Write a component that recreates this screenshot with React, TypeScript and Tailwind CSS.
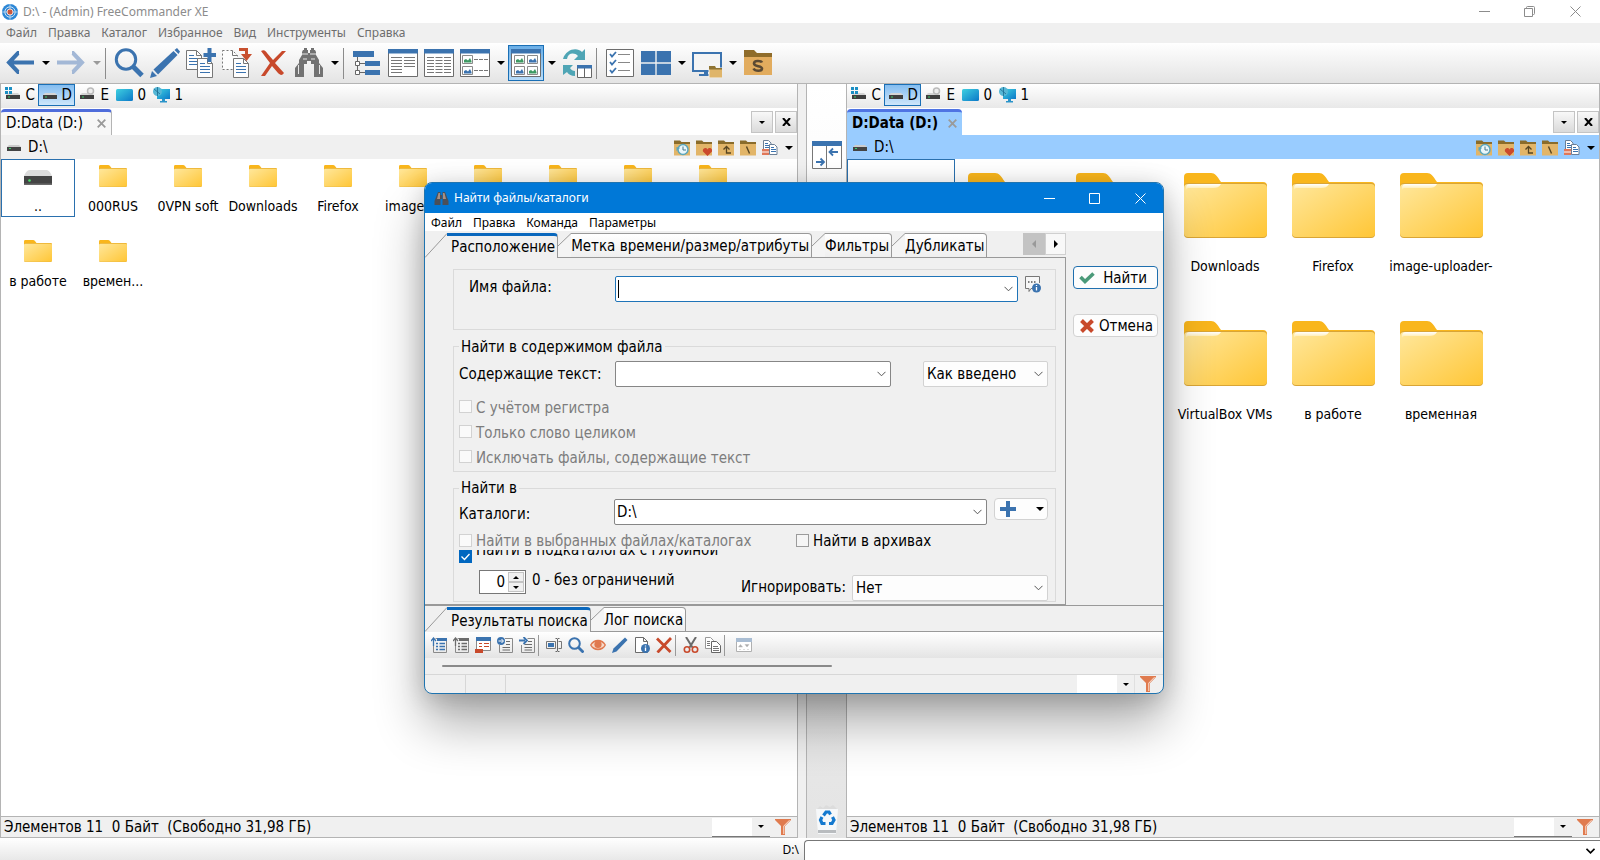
import type { ReactNode } from 'react'

const BLUE = '#3b73af'

/* ---------- small shared pieces ---------- */

function Caret({ color = '#000' }: { color?: string }) {
  return (
    <svg viewBox="0 0 8 4" className="h-1 w-2 shrink-0" aria-hidden="true">
      <path d="M0 0h8L4 4z" fill={color} />
    </svg>
  )
}

function Chevron() {
  return (
    <svg viewBox="0 0 9 6" className="h-1.5 w-[9px] shrink-0" fill="none" stroke="#555" aria-hidden="true">
      <path d="M.5.8 4.5 4.8 8.5.8" />
    </svg>
  )
}

function Funnel() {
  return (
    <svg viewBox="0 0 16 16" className="size-4 shrink-0" aria-hidden="true">
      <path d="M0 0h16v1L10 7v9H6V7L0 1z" fill="#e07b4f" />
      <path d="M14.5 1.2 8.8 7v8" stroke="#fbe4d8" fill="none" />
    </svg>
  )
}

/* ---------- main toolbar icons (30 x 30) ---------- */

function Icon30({ children }: { children: ReactNode }) {
  return (
    <svg viewBox="0 0 30 30" className="size-[30px]" fill="none" aria-hidden="true">
      {children}
    </svg>
  )
}

function ArrowIcon({ forward = false }: { forward?: boolean }) {
  return (
    <Icon30>
      {forward ? (
        <path d="M1 14.500H26M16 5h1l9 9.500L17 24h-1" stroke="#a3b8d6" strokeWidth="4" />
      ) : (
        <path d="M29 14.500H4M14 5h-1L4 14.500 13 24h1" stroke={BLUE} strokeWidth="4" />
      )}
    </Icon30>
  )
}

function SearchIcon() {
  return (
    <Icon30>
      <circle cx="12" cy="11.500" r="9.700" stroke={BLUE} strokeWidth="3" />
      <path d="m19 18.500 9 9" stroke={BLUE} strokeWidth="5" />
    </Icon30>
  )
}

function PencilIcon() {
  return (
    <Icon30>
      <path d="M0 30l2-7 5 5z" fill={BLUE} />
      <path d="M3.500 21.500 23.500 3l4 4L8 26.500z" fill={BLUE} />
      <path d="m24.500 2 2.500-2 3 3.500-1.500 2.500z" fill={BLUE} />
      <path d="m2.500 22 5.500 5.500" stroke="#dfe8f2" />
    </Icon30>
  )
}

function PageLines({ x, y, dashed = false }: { x: number; y: number; dashed?: boolean }) {
  return (
    <g transform={`translate(${x} ${y})`}>
      <path
        d="M.5.500h10l5 5v14H.500z"
        fill="#fdfdfd"
        stroke="#777"
        strokeDasharray={dashed ? '2 2' : undefined}
      />
      <path d="M10.500.500v5h5" stroke="#777" />
      {!dashed && <path d="M3 5.500h5M3 8.500h10M3 11.500h10M3 14.500h10" stroke={BLUE} />}
    </g>
  )
}

function CopyIcon() {
  return (
    <Icon30>
      <PageLines x={0} y={2} />
      <PageLines x={11} y={10} />
      <path d="M21.500 0h4v5h5v4h-5v5h-4V9h-4V5h4z" fill={BLUE} />
    </Icon30>
  )
}

function MoveIcon() {
  return (
    <Icon30>
      <PageLines x={0} y={2} dashed />
      <PageLines x={11} y={10} />
      <path d="M17 0h9v6h4l-5.500 7L19 6h4V3h-6z" fill="#c8502f" />
    </Icon30>
  )
}

function DeleteIcon() {
  return (
    <Icon30>
      <path d="M3 3c3-2 5 0 6 2l6 7 9-9h4L17 15l9 10c-2 3-4 2-6 0l-6-7-7 10H3l9-13z" fill="#c8492b" />
    </Icon30>
  )
}

function Binoculars() {
  return (
    <Icon30>
      <path
        d="M9 2h5v3h2V2h5l1 2v3l3 5v3l4 5v9h-9V16h-3v-3h-4v3h-3v13H1v-9l4-5v-3l3-5V4z"
        fill="#727272"
      />
      <path d="M8 6h6M16 6h6M4.500 17v9M25.500 17v9M9 11h4M17 11h4" stroke="#e6e6e6" />
      <path d="M10 0h3v2h-3zM17 0h3v2h-3z" fill="#727272" />
    </Icon30>
  )
}

function TreeIcon() {
  return (
    <Icon30>
      <path d="M1 3h21v6H1zM13 13h15v5H13zM13 22h15v5H13z" fill={BLUE} />
      <path d="M5.500 9v15.500M5.500 15.500H13M5.500 24.500H13" stroke="#666" />
      <path d="M3.500 13.500h4v4h-4zM3.500 22.500h4v4h-4z" fill="#fff" stroke="#666" />
    </Icon30>
  )
}

function WindowFrame({ children }: { children: ReactNode }) {
  return (
    <Icon30>
      <path d="M.5 1.500h29v27H.500z" fill="#fff" stroke="#6d6d6d" />
      <path d="M0 1h30v4.500H0z" fill={BLUE} />
      {children}
    </Icon30>
  )
}

function Picture({ x, y, color }: { x: number; y: number; color: string }) {
  return (
    <g transform={`translate(${x} ${y})`}>
      <path d="M.5.500h10v8H.500z" fill="#fff" stroke="#8a8a8a" />
      <path d="M2 7.500V5l2-1 2 1.500L8 3l1.500 3v1.500z" fill={color} />
    </g>
  )
}

const ColumnsIcon = () => (
  <WindowFrame>
    <path
      d="M3 9.500h11M3 12.500h11M3 15.500h11M3 18.500h11M3 21.500h11M3 24.500h11M16 9.500h11M16 12.500h11M16 15.500h11M16 18.500h11"
      stroke="#777"
    />
  </WindowFrame>
)

const DetailsIcon = () => (
  <WindowFrame>
    <path
      d="M3 9.500h24M3 12.500h24M3 15.500h24M3 18.500h24M3 21.500h24M3 24.500h24"
      stroke="#777"
      strokeDasharray="7 1.500"
    />
  </WindowFrame>
)

const ThumbListIcon = () => (
  <WindowFrame>
    <Picture x={2} y={7} color="#3d9a63" />
    <Picture x={2} y={18} color={BLUE} />
    <path d="M14 11.500h14M14 22.500h14" stroke="#777" strokeDasharray="4 1" />
  </WindowFrame>
)

const ThumbsIcon = () => (
  <WindowFrame>
    <Picture x={3} y={7} color="#3d9a63" />
    <Picture x={16} y={7} color={BLUE} />
    <Picture x={3} y={18} color={BLUE} />
    <Picture x={16} y={18} color="#3d9a63" />
  </WindowFrame>
)

function RefreshIcon() {
  return (
    <Icon30>
      <path d="M1 11C4 1 15-1 20 4l3-3v11H12l4-4C12 4 6 5 5 11z" fill="#4fa5b5" />
      <path d="M1 27V17h10l-3 3c1 2 3 3 5 3v5c-4 0-7-2-8-4l-4 3z" fill="#4fa5b5" />
      <path d="M15.500 17.500h14v12h-14zM22.500 17v13" fill="#fff" stroke="#666" />
      <path d="M15 17h15v3.500H15z" fill={BLUE} />
    </Icon30>
  )
}

function ChecklistIcon() {
  return (
    <Icon30>
      <path d="M1.500 1.500h27v27h-27z" fill="#fff" stroke="#6d6d6d" />
      <path d="M13 6.500h12M13 14.500h12M13 22.500h12" stroke="#888" />
      <path d="m5 6 2 2.500L11 4M5 14l2 2.500 4-4.500M5 22l2 2.500 4-4.500" stroke={BLUE} strokeWidth="1.800" />
    </Icon30>
  )
}

const TilesIcon = () => (
  <Icon30>
    <path d="M0 3h14.300v11.300H0zM15.700 3H30v11.300H15.700zM0 15.700h14.300V27H0zM15.700 15.700H30V27H15.700z" fill={BLUE} />
  </Icon30>
)

const MonitorIcon = () => (
  <Icon30>
    <path d="M1 5h28v18H1z" fill="#f4f4f4" stroke={BLUE} strokeWidth="2" />
    <path d="M7 26h11v2H7zM12 24h4v2h-4z" fill={BLUE} />
    <path d="M17 18h6l1 2h7v10H17z" fill="#dfb56a" stroke="#f2f2f2" strokeWidth="1" />
    <path d="M17 18h6l1 2h7v1.500H17z" fill="#8f7433" />
  </Icon30>
)

function ShellFolderIcon() {
  return (
    <Icon30>
      <path d="M1 2h10l3 3h15v4H1z" fill="#8f6c2a" />
      <path d="M1 9h28v18H1z" fill="#e2ac5e" />
      <path
        d="M19 14.500c-1-2-8-2.500-8 1s8 2 8 5-7 3-8.500 0"
        stroke="#5c4a33"
        strokeWidth="2.600"
      />
    </Icon30>
  )
}

function ToolButton({ label, pressed = false, children }: { label: string; pressed?: boolean; children: ReactNode }) {
  return (
    <button
      type="button"
      aria-label={label}
      className={
        pressed
          ? 'grid size-9 shrink-0 place-items-center border border-[#1a6fb5] bg-linear-to-b from-[#6aaee6] to-[#b8dcf8]'
          : 'grid size-9 shrink-0 place-items-center'
      }
    >
      {children}
    </button>
  )
}

function DropButton({ label, color }: { label: string; color?: string }) {
  return (
    <button type="button" aria-label={label} className="grid h-9 w-[15px] shrink-0 place-items-center">
      <Caret color={color} />
    </button>
  )
}

const Separator = () => <span className="mr-[5px] ml-px h-[31px] w-px shrink-0 bg-[#8c8c8c]" />

function MainToolbar() {
  return (
    <div className="flex h-[41px] shrink-0 items-center border-b border-[#b4b4b4] bg-linear-to-b from-white to-[#e4e4e4] pl-0.5">
      <ToolButton label="Назад"><ArrowIcon /></ToolButton>
      <DropButton label="История назад" />
      <ToolButton label="Вперёд"><ArrowIcon forward /></ToolButton>
      <DropButton label="История вперёд" color="#9a9a9a" />
      <Separator />
      <ToolButton label="Просмотр"><SearchIcon /></ToolButton>
      <ToolButton label="Изменить"><PencilIcon /></ToolButton>
      <ToolButton label="Копировать"><CopyIcon /></ToolButton>
      <ToolButton label="Переместить"><MoveIcon /></ToolButton>
      <ToolButton label="Удалить"><DeleteIcon /></ToolButton>
      <ToolButton label="Найти файлы"><Binoculars /></ToolButton>
      <DropButton label="Варианты поиска" />
      <Separator />
      <ToolButton label="Дерево"><TreeIcon /></ToolButton>
      <ToolButton label="Список"><ColumnsIcon /></ToolButton>
      <ToolButton label="Таблица"><DetailsIcon /></ToolButton>
      <ToolButton label="Эскизы списком"><ThumbListIcon /></ToolButton>
      <DropButton label="Варианты списка" />
      <ToolButton label="Эскизы" pressed><ThumbsIcon /></ToolButton>
      <DropButton label="Варианты эскизов" />
      <ToolButton label="Обновить"><RefreshIcon /></ToolButton>
      <Separator />
      <ToolButton label="Выбор"><ChecklistIcon /></ToolButton>
      <ToolButton label="Раскладка"><TilesIcon /></ToolButton>
      <DropButton label="Варианты раскладки" />
      <ToolButton label="Рабочий стол"><MonitorIcon /></ToolButton>
      <DropButton label="Системные папки" />
      <ToolButton label="Папка S"><ShellFolderIcon /></ToolButton>
    </div>
  )
}

/* ---------- drives ---------- */

type DriveKind = 'system' | 'disk' | 'optical' | 'desktop' | 'network'

function DriveIcon({ kind }: { kind: DriveKind }) {
  if (kind === 'desktop' || kind === 'network') {
    return (
      <svg viewBox="0 0 17 16" className="h-4 w-[17px] shrink-0" aria-hidden="true">
        <defs>
          <linearGradient id="screen" x1="0" y1="0" x2="1" y2="1">
            <stop offset="0" stopColor="#3fd0e0" />
            <stop offset="1" stopColor="#0b78c8" />
          </linearGradient>
        </defs>
        {kind === 'desktop' ? (
          <rect x="0" y="2" width="17" height="12" rx="1.500" fill="url(#screen)" />
        ) : (
          <>
            <path d="M4 2h13v10H4z" fill="url(#screen)" />
            <path d="M9 12h3v2h2v1.500H7V14h2z" fill="#2a93c9" />
            <circle cx="4.500" cy="4.500" r="4.500" fill="#56b7d6" />
            <path d="M1 2l6 5M4.500 0v9" stroke="#1c6c92" strokeWidth=".8" />
          </>
        )}
      </svg>
    )
  }
  return (
    <svg viewBox="0 0 16 16" className="size-4 shrink-0" aria-hidden="true">
      <path d="M3 6h10l2 2H1z" fill="#d5d5d5" />
      <path d="M1 8h14v4H1z" fill="#3f3f3f" />
      <path d="M3 9.500h2v1H3z" fill="#3bd16b" />
      {kind === 'system' && <path d="M0 0h3v3H0zM4 0h3v3H4zM0 4h3v3H0zM4 4h3v3H4z" fill="#1c8fc4" />}
      {kind === 'optical' && <circle cx="11.500" cy="4" r="3" fill="#eee" stroke="#bbb" strokeWidth="1.500" />}
    </svg>
  )
}

const drives: { name: string; kind: DriveKind }[] = [
  { name: 'C', kind: 'system' },
  { name: 'D', kind: 'disk' },
  { name: 'E', kind: 'optical' },
  { name: '0', kind: 'desktop' },
  { name: '1', kind: 'network' },
]

function DriveBar() {
  return (
    <div className="flex h-6 shrink-0 items-start bg-linear-to-b from-white to-[#e8e8e8] text-[15px]">
      {drives.map((d) => (
        <button
          key={d.name}
          type="button"
          className={
            d.name === 'D'
              ? 'flex h-[22px] w-[37px] items-center justify-between border border-[#1a6fb5] bg-linear-to-b from-[#84bdf0] to-[#cde6fb] pr-0.5 pl-[3px]'
              : 'flex h-[22px] w-[37px] items-center justify-between pr-[3px] pl-1'
          }
        >
          <DriveIcon kind={d.kind} />
          <span className="pt-0.5">{d.name}</span>
        </button>
      ))}
    </div>
  )
}

/* ---------- file panels ---------- */

function Folder({ large = false }: { large?: boolean }) {
  return (
    <svg viewBox="0 0 83 65" className={large ? 'h-[65px] w-[83px]' : 'h-[22px] w-7'} aria-hidden="true">
      <defs>
        <linearGradient id="folder" x1="0" y1="0" x2="1" y2="1">
          <stop offset="0" stopColor="#ffe79b" />
          <stop offset="1" stopColor="#ffc636" />
        </linearGradient>
        <linearGradient id="sheen" x1="0" y1="0" x2="0" y2="1">
          <stop offset="0" stopColor="#fff" />
          <stop offset="1" stopColor="#ffe79b" />
        </linearGradient>
      </defs>
      <path d="M0 4a4 4 0 0 1 4-4h23c4 0 6 3 10 9h42a4 4 0 0 1 4 4v20H0z" fill="#f9b61c" />
      <path d="M0 14a4 4 0 0 1 4-4h75a4 4 0 0 1 4 4v47a4 4 0 0 1-4 4H4a4 4 0 0 1-4-4z" fill="#d9a536" />
      <path d="M0 15a4 4 0 0 1 4-4h75a4 4 0 0 1 4 4v45a4 4 0 0 1-4 4H4a4 4 0 0 1-4-4z" fill="url(#folder)" />
      {large && <path d="M2 15a4 4 0 0 1 4-4h31c-2 3-4 4-8 4H6c-2 0-3 0-4 2z" fill="url(#sheen)" />}
    </svg>
  )
}

function DriveLarge({ large = false }: { large?: boolean }) {
  return (
    <svg viewBox="0 0 28 22" className={large ? 'h-[65px] w-[83px]' : 'h-[22px] w-7'} aria-hidden="true">
      <path d="M5 5h18q3 1 5 6H0q2-5 5-6z" fill="#dcdcdc" />
      <path d="M0 11h28v9H0z" fill="#444" />
      <path d="M0 18.500h28v1.500H0z" fill="#6a6a6a" />
      <circle cx="5.500" cy="15.500" r="1.300" fill="#49e06a" />
    </svg>
  )
}

function PathIcon({ label, children, plain = false }: { label: string; children: ReactNode; plain?: boolean }) {
  return (
    <button type="button" aria-label={label} className="grid w-[22px] place-items-center">
      <svg viewBox="0 0 16 16" className="size-4" fill="none" aria-hidden="true">
        {!plain && (
          <>
            <path d="M0 .500h6L7.500 2H16v3H0z" fill="#8a6c2b" />
            <path d="M0 4h16v11.500H0z" fill="#e2b568" />
          </>
        )}
        {children}
      </svg>
    </button>
  )
}

const Sheet = ({ x, y }: { x: number; y: number }) => (
  <g transform={`translate(${x} ${y})`}>
    <path d="M.5.500h5l2.500 2.500v7.500H.500z" fill="#fff" stroke="#6b7f96" />
    <path d="M2 3.500h3M2 5.500h5M2 7.500h5" stroke={BLUE} />
  </g>
)

function SmallTabButton({ label, children }: { label: string; children: ReactNode }) {
  return (
    <button
      type="button"
      aria-label={label}
      className="grid size-[22px] place-items-center border border-[#c4c4c4] bg-linear-to-b from-[#f8f8f8] to-[#dadada]"
    >
      {children}
    </button>
  )
}

function StatusFilter() {
  return (
    <div className="flex items-center gap-[5px] pr-1.5">
      <div className="flex h-[19px] w-[58px] items-center border-b border-[#777]">
        <input aria-label="Фильтр" className="h-full w-10 bg-white outline-none" />
        <button type="button" aria-label="Список фильтров" className="grid flex-1 place-items-center">
          <svg viewBox="0 0 6 3" className="h-[3px] w-1.5" aria-hidden="true"><path d="M0 0h6L3 3z" /></svg>
        </button>
      </div>
      <button type="button" aria-label="Применить фильтр"><Funnel /></button>
    </div>
  )
}

const folders: { name: string; short?: string }[] = [
  { name: '..' },
  { name: '000RUS' },
  { name: '0VPN soft' },
  { name: 'Downloads' },
  { name: 'Firefox' },
  { name: 'image-uploader-', short: 'image-...' },
  { name: '' },
  { name: '' },
  { name: '' },
  { name: 'VirtualBox VMs', short: 'VirtualB...' },
  { name: 'в работе' },
  { name: 'временная', short: 'времен...' },
]

function Panel({ active = false }: { active?: boolean }) {
  return (
    <section className="flex min-w-0 flex-1 flex-col border-x border-[#b4b4b4] bg-white">
      <DriveBar />
      <div className="flex h-[27px] shrink-0 items-end justify-between">
        <div
          className={
            active
              ? 'flex h-[26px] items-center gap-2.5 rounded-t-sm border-t-[3px] border-[#4f74e3] bg-[#99ccff] px-[5px] font-bold'
              : 'flex h-[26px] items-center gap-3.5 rounded-t-sm border-t-[3px] border-r border-t-[#4f6ddb] border-r-[#b4b4b4] bg-[#f7f7f7] px-[5px]'
          }
        >
          <span className="text-[15px] whitespace-nowrap">D:Data (D:)</span>
          <button type="button" aria-label="Закрыть вкладку">
            <svg viewBox="0 0 9 9" className="size-[9px]" stroke="#9a9a9a" strokeWidth="1.800" aria-hidden="true">
              <path d="m.7.700 7.600 7.600M8.300.700.700 8.300" />
            </svg>
          </button>
        </div>
        <div className="flex gap-0.5 pb-0.5">
          <SmallTabButton label="Список вкладок">
            <svg viewBox="0 0 6 3" className="h-[3px] w-1.5" aria-hidden="true"><path d="M0 0h6L3 3z" /></svg>
          </SmallTabButton>
          <SmallTabButton label="Закрыть">
            <svg viewBox="0 0 9 8" className="h-2 w-[9px]" stroke="#000" strokeWidth="2" aria-hidden="true">
              <path d="m1 0 7 8M8 0 1 8" />
            </svg>
          </SmallTabButton>
        </div>
      </div>
      <div
        className={
          active
            ? 'flex h-6 shrink-0 items-center bg-[#99ccff] pt-0.5 pr-0.5 pl-1.5'
            : 'flex h-6 shrink-0 items-center bg-[#f0f0f0] pt-0.5 pr-0.5 pl-1.5'
        }
      >
        <svg viewBox="0 0 14 6" className="h-1.5 w-3.5" aria-hidden="true">
          <path d="M2 0h10l2 2H0z" fill="#ccc" />
          <path d="M0 2h14v4H0z" fill="#444" />
          <path d="M2 3h2v1H2z" fill="#3bd16b" />
        </svg>
        <span className="ml-[7px] flex-1 text-[15px]">D:\</span>
        <PathIcon label="История">
          <circle cx="9" cy="9.500" r="5" fill="#eaf6fa" stroke="#5aa6bd" strokeWidth="1.500" />
          <path d="M9 6.500v3.500h3" stroke="#44788a" />
          <path d="M2.500 7v4L6 8z" fill="#5aa6bd" />
        </PathIcon>
        <PathIcon label="Избранное">
          <path d="M11.500 16 7 11.500c-1-3 3-5 4.500-2 1.500-3 5.500-1 4.500 2z" fill="#cb4a2c" />
        </PathIcon>
        <PathIcon label="Вверх">
          <path d="M8.500 6.500V13H13M5.500 9.500l3-3 3 3" stroke="#574521" strokeWidth="1.300" />
        </PathIcon>
        <PathIcon label="Корень">
          <path d="m6.500 6.500 3 7" stroke="#574521" strokeWidth="1.400" />
        </PathIcon>
        <PathIcon label="Копировать путь" plain>
          <Sheet x={1} y={0} />
          <Sheet x={7} y={4} />
          <path d="M0 9h7v6H0z" fill="#e0785a" />
          <path d="M0 12h7" stroke="#fff" />
        </PathIcon>
        <button type="button" aria-label="Ещё" className="ml-0.5 grid h-5 w-3 place-items-center">
          <Caret />
        </button>
      </div>
      <ul
        className={
          active
            ? 'grid flex-1 auto-rows-[148px] grid-cols-[repeat(auto-fill,108px)] content-start'
            : 'grid flex-1 auto-rows-[75px] grid-cols-[repeat(auto-fill,74px)] content-start gap-x-px'
        }
      >
        {folders.map((item, i) => (
          <li key={i} className="flex min-w-0 items-start">
            <button
              type="button"
              className={[
                'flex w-full min-w-0 flex-col items-center border',
                i === 0 ? 'border-[#2a70ae]' : 'border-transparent',
                active ? 'h-[132px] gap-[19px] pt-[13px]' : 'h-[58px] gap-2.5 pt-[5px]',
              ].join(' ')}
            >
              {i === 0 ? <DriveLarge large={active} /> : <Folder large={active} />}
              <span className="text-sm leading-[18px] whitespace-nowrap">{active ? item.name : (item.short ?? item.name)}</span>
            </button>
          </li>
        ))}
      </ul>
      <footer className="flex h-[22px] shrink-0 items-center justify-between border-y border-[#b4b4b4] bg-[#f0f0f0] pl-[3px]">
        <span className="text-[15px] leading-5 whitespace-pre">Элементов 11  0 Байт  (Свободно 31,98 ГБ)</span>
        <StatusFilter />
      </footer>
    </section>
  )
}

function MiddleBar() {
  return (
    <div className="flex w-12 shrink-0 bg-[#f0f0f0] pl-2">
      <div className="flex flex-1 flex-col items-center justify-between border-l border-[#b4b4b4] bg-linear-to-b from-white to-[#e4e4e4] pt-[57px] pb-1">
        <button type="button" aria-label="Поменять панели">
          <svg viewBox="0 0 30 28" className="h-7 w-[30px]" fill="none" aria-hidden="true">
            <path d="M.5.500h29v27H.500zM14.500 4v24" fill="#fff" stroke="#777" />
            <path d="M0 0h30v5H0z" fill={BLUE} />
            <path d="M26 11h-8M21 7.500 17.500 11l3.500 3.500M4 21h7M8.500 17.500 12 21l-3.500 3.500" stroke={BLUE} strokeWidth="1.800" />
          </svg>
        </button>
        <button type="button" aria-label="Корзина">
          <svg viewBox="0 0 22 30" className="h-[30px] w-[22px]" aria-hidden="true">
            <path d="M1 5 4 2l3 2 3-3 4 2 3-2 4 4z" fill="#dcdcdc" />
            <path d="M0 5h22l-2 25H2z" fill="#f6f8fa" />
            <path d="M2 26h18v3H2z" fill="#b9bcbf" />
            <g fill="none" stroke="#1479cf" strokeWidth="3.200">
              <path d="m7.500 11.500 2.500-3.500h3l1.500 2.500" />
              <path d="m16.500 13 1.500 3-2 3.500h-3" />
              <path d="M9.500 19.500H6L4.500 16 6 13" />
            </g>
          </svg>
        </button>
      </div>
    </div>
  )
}

/* ---------- search dialog ---------- */

function DialogTab({ label, active = false }: { label: string; active?: boolean }) {
  return (
    <button type="button" role="tab" aria-selected={active} className="flex h-[25px] shrink-0">
      {active ? (
        <svg viewBox="0 0 22 25" className="h-[25px] w-[22px]" fill="none" aria-hidden="true">
          <path d="M0 25 22 0v25z" fill="#f0f0f0" />
          <path d="M0 24.500 22 .500" stroke="#999" />
        </svg>
      ) : (
        <svg viewBox="0 0 13 25" className="h-[25px] w-[13px]" fill="none" aria-hidden="true">
          <path d="M0 13 13 0v25H0z" fill="#f4f4f4" />
          <path d="M0 13 13 .500M0 24.500h13" stroke="#999" />
        </svg>
      )}
      <span
        className={
          active
            ? 'flex h-full items-center rounded-tr-sm border-t-[3px] border-r border-t-[#0a68bd] border-r-[#999] bg-[#f0f0f0] pt-0.5 pr-0.5 pl-1 text-[15px] whitespace-nowrap'
            : 'flex h-full items-center rounded-tr-sm border-t border-r border-b border-[#999] bg-linear-to-b from-white to-[#efefef] pt-0.5 pr-0.5 text-[15px] whitespace-nowrap'
        }
      >
        {label}
      </span>
    </button>
  )
}

function Combo({ id, value = '', className, focused = false }: { id: string; value?: string; className: string; focused?: boolean }) {
  return (
    <div
      className={[
        'flex h-[26px] items-center rounded-xs border bg-white pr-1 pl-0.5',
        focused ? 'border-[#1f74b8]' : 'border-[#868686]',
        className,
      ].join(' ')}
    >
      {focused && <span className="h-[18px] w-px bg-black" />}
      <input id={id} defaultValue={value} className="h-full min-w-0 flex-1 text-[15px] outline-none" />
      <button type="button" aria-label="Открыть список" tabIndex={-1}><Chevron /></button>
    </div>
  )
}

function DropList({ id, label, value, className }: { id: string; label?: string; value: string; className: string }) {
  return (
    <div className={['grid h-[26px] items-center rounded-xs border border-[#d2d2d2] bg-[#fdfdfd]', className].join(' ')}>
      <select id={id} aria-label={label} defaultValue={value} className="col-start-1 row-start-1 h-full w-full appearance-none pt-0.5 pl-[3px] text-[15px] outline-none">
        <option>{value}</option>
      </select>
      <span className="pointer-events-none col-start-1 row-start-1 mr-1 justify-self-end"><Chevron /></span>
    </div>
  )
}

function Tick({ id, label, disabled = false, checked = false }: { id: string; label?: string; disabled?: boolean; checked?: boolean }) {
  return (
    <span className="flex items-center gap-1">
      <span className="grid size-[13px] shrink-0">
        <input
          id={id}
          type="checkbox"
          disabled={disabled}
          defaultChecked={checked}
          className="col-start-1 row-start-1 size-[13px] appearance-none border border-[#9b9b9b] bg-[#f5f5f5] checked:border-[#0067c0] checked:bg-[#0067c0] disabled:border-[#d2d2d2] disabled:bg-[#fafafa]"
        />
        {checked && (
          <svg viewBox="0 0 13 13" className="pointer-events-none col-start-1 row-start-1 size-[13px]" fill="none" stroke="#fff" strokeWidth="1.300" aria-hidden="true">
            <path d="m2.500 6.500 3 3L10.500 4" />
          </svg>
        )}
      </span>
      {label && (
        <label
          htmlFor={id}
          className={disabled ? 'pt-0.5 text-[15px] leading-5 whitespace-nowrap text-[#7d7d7d]' : 'pt-0.5 text-[15px] leading-5 whitespace-nowrap'}
        >
          {label}
        </label>
      )}
    </span>
  )
}

function SearchForm() {
  return (
    <div className="min-w-0 flex-1 border-r border-b border-[#999] pt-[11px] pr-[9px] pb-0.5 pl-7">
      <div className="flex h-[61px] items-start border border-[#dadada] pt-[6px] pr-3.5 pl-[15px]">
        <label htmlFor="name" className="w-[146px] text-[15px] leading-[22px]">Имя файла:</label>
        <Combo id="name" focused className="flex-1" />
        <button type="button" aria-label="Справка по маскам" className="ml-[7px]">
          <svg viewBox="0 0 16 17" className="h-[17px] w-4" fill="none" aria-hidden="true">
            <path d="M7.500 12.500H6l-2 3v-3H.500V.500h14V7" stroke="#777" fill="#f7f7f7" />
            <path d="M3 6h1.500M6 6h1.500M9 6h1.500" stroke="#555" strokeWidth="1.500" />
            <circle cx="11.500" cy="12" r="4.500" fill={BLUE} />
            <path d="M11.500 11v3.500M11.500 9v1" stroke="#fff" strokeWidth="1.300" />
          </svg>
        </button>
      </div>

      <fieldset className="mt-2 min-w-0 border border-[#dadada] pb-0.5">
        <legend className="ml-[5px] px-0.5 pt-px text-[15px] leading-4">Найти в содержимом файла</legend>
        <div className="flex items-center pt-[6px] pr-[7px] pl-[5px]">
          <label htmlFor="text" className="w-[156px] pt-0.5 text-[15px] whitespace-nowrap">Содержащие текст:</label>
          <Combo id="text" className="w-[276px]" />
          <DropList id="mode" label="Режим" value="Как введено" className="ml-auto w-[125px]" />
        </div>
        <div className="flex flex-col pt-[7px] pl-[5px]">
          <div className="flex h-[25px] items-center"><Tick id="case" label="С учётом регистра" disabled /></div>
          <div className="flex h-[25px] items-center"><Tick id="word" label="Только слово целиком" disabled /></div>
          <div className="flex h-[25px] items-center"><Tick id="exclude" label="Исключать файлы, содержащие текст" disabled /></div>
        </div>
      </fieldset>

      <fieldset className="mt-2 min-w-0 border border-[#dadada]">
        <legend className="ml-[5px] px-0.5 text-[15px] leading-4">Найти в</legend>
        <div className="flex items-start pt-0.5 pr-[7px] pl-[5px]">
          <label htmlFor="dirs" className="w-[155px] text-[15px] leading-8">Каталоги:</label>
          <Combo id="dirs" value="D:\" className="mt-px flex-1" />
          <button type="button" aria-label="Добавить каталог" className="ml-[7px] flex h-[22px] w-[54px] items-center justify-between rounded-sm border border-[#d2d2d2] bg-[#fdfdfd] pr-[3px] pl-[5px]">
            <svg viewBox="0 0 16 16" className="size-4" fill={BLUE} aria-hidden="true"><path d="M6 0h4v6h6v4h-6v6H6v-6H0V6h6z" /></svg>
            <Caret />
          </button>
        </div>
        <div className="flex h-5 items-center pl-[5px]">
          <span className="w-[337px]"><Tick id="selected" label="Найти в выбранных файлах/каталогах" disabled /></span>
          <Tick id="archives" label="Найти в архивах" />
        </div>
        <div className="flex items-start gap-1 pl-[5px]">
          <Tick id="sub" checked />
          <label htmlFor="sub" className="h-1.5 overflow-hidden text-[15px] leading-[0px] whitespace-nowrap">Найти в подкаталогах с глубиной</label>
        </div>
        <div className="flex items-start pt-[7px] pr-[7px] pl-[25px]">
          <div className="flex h-6 w-[47px] items-center border border-[#777] bg-white p-px">
            <input id="depth" aria-label="Глубина" defaultValue="0" className="h-full min-w-0 flex-1 pr-[3px] text-right text-[15px] outline-none" />
            <div className="flex flex-col">
              <button type="button" aria-label="Больше" className="grid h-2.5 w-4 place-items-center border border-[#c4c4c4] bg-[#f0f0f0]">
                <svg viewBox="0 0 6 3" className="h-[3px] w-1.5" aria-hidden="true"><path d="M0 3h6L3 0z" /></svg>
              </button>
              <button type="button" aria-label="Меньше" className="grid h-2.5 w-4 place-items-center border border-[#c4c4c4] bg-[#f0f0f0]">
                <svg viewBox="0 0 6 3" className="h-[3px] w-1.5" aria-hidden="true"><path d="M0 0h6L3 3z" /></svg>
              </button>
            </div>
          </div>
          <label htmlFor="depth" className="ml-1.5 text-[15px] leading-5 whitespace-nowrap">0 - без ограничений</label>
          <label htmlFor="ignore" className="mt-1 mr-1.5 ml-auto text-[15px] leading-[26px] whitespace-nowrap">Игнорировать:</label>
          <DropList id="ignore" value="Нет" className="mt-[5px] w-[196px]" />
        </div>
      </fieldset>
    </div>
  )
}

/* results toolbar icons, 16 x 16 */

function ResultButton({ label, children }: { label: string; children: ReactNode }) {
  return (
    <button type="button" aria-label={label} className="grid w-[22px] place-items-center">
      <svg viewBox="0 0 16 16" className="size-4" fill="none" aria-hidden="true">{children}</svg>
    </button>
  )
}

const ResultSeparator = () => <span className="mr-1 h-[21px] w-px bg-[#999]" />

const ListGlyph = ({ color, offset = 4 }: { color: string; offset?: number }) => (
  <>
    <path d={`M${offset + 0.5} 1.500H15.500v14H2.500V7`} stroke="#8a8a8a" />
    <path d="M6 1h10v3H6z" fill={color} />
    <path d="M5 6.500h2M8.500 6.500H14M5 9.500h2M8.500 9.500H14M5 12.500h2M8.500 12.500H14" stroke={color} strokeWidth="1.400" />
  </>
)

function ResultsToolbar() {
  return (
    <div className="flex h-[26px] items-center bg-linear-to-b from-white to-[#e4e4e4] pl-[3px]">
      <ResultButton label="Перейти">
        <ListGlyph color={BLUE} />
        <path d="M2.500 9V1.500M0 4l2.500-3L5 4" stroke={BLUE} strokeWidth="1.300" />
      </ResultButton>
      <ResultButton label="К папке">
        <ListGlyph color="#6b6b6b" />
        <path d="M2.500 9V1.500M0 4l2.500-3L5 4" stroke="#6b6b6b" strokeWidth="1.300" />
      </ResultButton>
      <ResultButton label="Убрать из списка">
        <path d="M1.500 1.500h14v12h-14z" stroke="#8a8a8a" fill="#fff" />
        <path d="M1 0h15v4H1z" fill={BLUE} />
        <path d="M4 6.500h3M9 6.500h5M4 9.500h3M9 9.500h5" stroke="#c8492b" />
        <path d="M0 12h8v4H0z" fill="#c8492b" />
      </ResultButton>
      <ResultButton label="Загрузить список">
        <path d="M8 1.500h7.500v14h-13V8" stroke="#8a8a8a" />
        <path d="M9 4.500h4M9 7.500h4M5.500 10.500H13M5.500 13H13" stroke="#6b6b6b" />
        <circle cx="4" cy="4" r="4" fill={BLUE} />
        <path d="M1.500 4H6M4.500 2l2 2-2 2" stroke="#fff" />
      </ResultButton>
      <ResultButton label="Сохранить список">
        <path d="M8.500 1.500h7v14h-13V8" stroke="#8a8a8a" />
        <path d="M9 4.500h4M5.500 7.500H13M5.500 10.500H13M5.500 13H13" stroke="#6b6b6b" />
        <path d="M0 3.500h6M4.500 0 8 3.500 4.500 7" stroke={BLUE} strokeWidth="1.800" />
      </ResultButton>
      <ResultSeparator />
      <ResultButton label="Переименовать">
        <path d="M.5 4.500h9v7h-9zM12.500 4.500h3v7h-3" stroke="#777" />
        <path d="M2 6h6v4H2z" fill={BLUE} />
        <path d="M9.500 1.500H11l.500.500.500-.500h1.500M11.500 2v12M9.500 14.500H11l.500-.500.500.500h1.500" stroke="#666" />
      </ResultButton>
      <ResultButton label="Просмотр">
        <circle cx="6.500" cy="6.500" r="5.300" stroke={BLUE} strokeWidth="2" />
        <path d="m10.500 10.500 5 5" stroke={BLUE} strokeWidth="2.800" />
      </ResultButton>
      <ResultButton label="Быстрый просмотр">
        <path d="M0 8c3-7 13-7 16 0-3 7-13 7-16 0z" fill="#e0784e" />
        <path d="M1.500 8c2-4.500 11-4.500 13 0-2 4.500-11 4.500-13 0z" fill="#f6d9c9" />
        <circle cx="8" cy="7.500" r="3.600" fill="#e0784e" />
      </ResultButton>
      <ResultButton label="Изменить">
        <path d="m0 16 1.500-4.500L13 .500 15.500 3 4.500 14.500z" fill={BLUE} />
      </ResultButton>
      <ResultButton label="Свойства">
        <path d="M1.500.500h8l4 4v11h-12zM9.500.500v4h4" stroke="#6b6b6b" fill="#fff" />
        <circle cx="11.500" cy="11.500" r="4.500" fill={BLUE} />
        <path d="M11.500 10.500V14M11.500 8.500v1" stroke="#fff" strokeWidth="1.300" />
      </ResultButton>
      <ResultButton label="Удалить">
        <path d="M1 1.500 14.500 15M15 1 1.500 15.500" stroke="#c8492b" strokeWidth="2.800" />
      </ResultButton>
      <ResultSeparator />
      <ResultButton label="Вырезать">
        <path d="M3 0 9.500 10.500M13 0 6.500 10.500" stroke="#6b6b6b" strokeWidth="2" />
        <circle cx="4" cy="12.500" r="2.700" stroke="#c8492b" strokeWidth="1.600" />
        <circle cx="12" cy="12.500" r="2.700" stroke="#c8492b" strokeWidth="1.600" />
      </ResultButton>
      <ResultButton label="Копировать">
        <path d="M.5.500h5l3 3v8h-8z" fill="#fff" stroke="#999" />
        <path d="M6.500 4.500h5l4 4v7h-9z" fill="#fff" stroke="#666" />
        <path d="M2 4.500h3M2 6.500h3M2 8.500h3M8 9.500h5M8 11.500h6M8 13.500h6" stroke="#777" />
      </ResultButton>
      <ResultSeparator />
      <span className="pl-1">
        <ResultButton label="Столбцы">
          <path d="M.5 1.500h15v13H.500z" fill="#fff" stroke="#b0b0b0" />
          <path d="M0 1h16v4H0z" fill="#a9bdd3" />
          <path d="m2.500 10 2-2.500 2 2.500zM9 7.500h4L11 10zM3 12.500h2M7 12.500h2M11 12.500h2" fill="#aaa" stroke="#bbb" strokeWidth=".5" />
        </ResultButton>
      </span>
    </div>
  )
}

function SearchDialog() {
  return (
    <div
      role="dialog"
      aria-label="Найти файлы/каталоги"
      className="absolute top-[182px] left-[424px] w-[740px] overflow-hidden rounded-lg border border-[#1f74b0] bg-[#f0f0f0] shadow-[0_30px_50px_rgba(0,0,0,0.32),0_4px_24px_rgba(0,0,0,0.18)]"
    >
      <header className="flex h-[30px] items-center bg-[#0078d7] pl-[9px] text-white">
        <svg viewBox="0 0 30 30" className="size-[15px]" aria-hidden="true">
          <path d="M8 2h5v26H1v-8zM22 2h-5v26h12v-8zM12 8h6v8h-6z" fill="#4b4f58" />
          <path d="M9 4h3v12H6zM18 4h3l3 12h-6z" fill="#a98f82" />
        </svg>
        <h1 className="ml-[5px] flex-1 font-['Noto_Sans',sans-serif] text-xs">Найти файлы/каталоги</h1>
        <button type="button" aria-label="Свернуть" className="grid h-full w-[45px] place-items-center">
          <svg viewBox="0 0 11 11" className="size-[11px]" stroke="#fff" aria-hidden="true"><path d="M0 5.500h11" /></svg>
        </button>
        <button type="button" aria-label="Развернуть" className="grid h-full w-[45px] place-items-center">
          <svg viewBox="0 0 11 11" className="size-[11px]" fill="none" stroke="#fff" aria-hidden="true"><path d="M.5.500h10v10H.500z" /></svg>
        </button>
        <button type="button" aria-label="Закрыть" className="grid h-full w-[46px] place-items-center">
          <svg viewBox="0 0 11 11" className="size-[11px]" stroke="#fff" aria-hidden="true"><path d="m.5.500 10 10M10.500.500l-10 10" /></svg>
        </button>
      </header>
      <nav className="flex h-[18px] items-center gap-[11px] bg-white pt-0.5 pl-1.5 font-['Noto_Sans',sans-serif] text-xs">
        {['Файл', 'Правка', 'Команда', 'Параметры'].map((m) => (
          <button key={m} type="button">{m}</button>
        ))}
      </nav>
      <div className="flex">
        <div className="flex min-w-0 flex-1 flex-col">
          <div role="tablist" className="flex pt-0.5">
            <DialogTab label="Расположение" active />
            <DialogTab label="Метка времени/размер/атрибуты" />
            <DialogTab label="Фильтры" />
            <DialogTab label="Дубликаты" />
            <div className="flex flex-1 items-start justify-end border-b border-[#999]">
              <button type="button" aria-label="Предыдущие вкладки" className="grid size-[22px] place-items-center bg-[#c3c3c3]">
                <svg viewBox="0 0 4 8" className="h-2 w-1" fill="#999" aria-hidden="true"><path d="M4 0v8L0 4z" /></svg>
              </button>
              <button type="button" aria-label="Следующие вкладки" className="grid h-[22px] w-[21px] place-items-center border border-[#d0d0d0] bg-[#f8f8f8]">
                <svg viewBox="0 0 4 8" className="h-2 w-1" aria-hidden="true"><path d="M0 0v8l4-4z" /></svg>
              </button>
            </div>
          </div>
          <SearchForm />
        </div>
        <div className="flex w-[97px] shrink-0 flex-col gap-[25px] pt-[35px] pr-[5px] pl-[7px]">
          <button type="button" className="flex h-[23px] items-center justify-between rounded border border-[#1f6fae] bg-[#fdfdfd] pr-2.5 pl-[5px] text-[15px]">
            <svg viewBox="0 0 16 12" className="h-3 w-4" fill="none" stroke="#4b9a79" strokeWidth="3.600" aria-hidden="true">
              <path d="m1.500 5 4.500 4.500L14.500 1.500" />
            </svg>
            <span className="pt-0.5">Найти</span>
          </button>
          <button type="button" className="flex h-[23px] items-center justify-between rounded border border-[#d2d2d2] bg-[#fdfdfd] pr-1 pl-1.5 text-[15px]">
            <svg viewBox="0 0 14 14" className="size-3.5" stroke="#c8492b" strokeWidth="4" aria-hidden="true">
              <path d="m1.500 1.500 11 11M12.500 1.500l-11 11" />
            </svg>
            <span className="pt-0.5">Отмена</span>
          </button>
        </div>
      </div>
      <div role="tablist" className="flex border-t border-[#999] pt-px">
        <DialogTab label="Результаты поиска" active />
        <DialogTab label="Лог поиска" />
        <div className="flex-1 border-b border-[#999]" />
      </div>
      <ResultsToolbar />
      <div className="flex h-4 items-center px-[17px]">
        <span className="h-0.5 w-[390px] rounded-full bg-[#8a8a8a]" />
      </div>
      <footer className="flex h-[19px] items-center border-t border-[#d7d7d7]">
        <span className="h-full w-[41px] border-r border-[#d7d7d7]" />
        <span className="h-full w-10 border-r border-[#d7d7d7]" />
        <input aria-label="Фильтр результатов" className="ml-auto h-full w-10 bg-white outline-none" />
        <button type="button" aria-label="Список фильтров" className="grid h-full w-[18px] place-items-center border-r border-[#e0e0e0]">
          <svg viewBox="0 0 6 3" className="h-[3px] w-1.5" aria-hidden="true"><path d="M0 0h6L3 3z" /></svg>
        </button>
        <button type="button" aria-label="Фильтр" className="mr-[7px] ml-[5px]"><Funnel /></button>
      </footer>
    </div>
  )
}

/* ---------- window ---------- */

const mainMenu = ['Файл', 'Правка', 'Каталог', 'Избранное', 'Вид', 'Инструменты', 'Справка']

export default function App() {
  return (
    <div className="relative flex h-screen flex-col overflow-hidden bg-[#f0f0f0] font-['DejaVu_Sans_Condensed','Noto_Sans',sans-serif] text-sm text-black">
      <header className="flex h-[23px] shrink-0 items-center bg-white pl-0.5 font-['Noto_Sans',sans-serif] text-xs text-[#8c8c8c]">
        <svg viewBox="0 0 16 16" className="size-4" fill="none" aria-hidden="true">
          <circle cx="8" cy="8" r="8" fill="#2c87d6" />
          <circle cx="8" cy="8" r="5.200" stroke="#cfe4f5" />
          <path d="M8 0v16M0 8h16" stroke="#a9cdec" />
          <circle cx="8" cy="8" r="3" fill="#c8573d" stroke="#f2d7cf" />
        </svg>
        <span className="ml-[5px] flex-1">D:\ - (Admin) FreeCommander XE</span>
        <button type="button" aria-label="Свернуть" className="grid h-full w-[45px] place-items-center">
          <svg viewBox="0 0 11 11" className="size-[11px]" stroke="#8c8c8c" aria-hidden="true"><path d="M0 5.500h11" /></svg>
        </button>
        <button type="button" aria-label="Восстановить" className="grid h-full w-[45px] place-items-center">
          <svg viewBox="0 0 11 11" className="size-[11px]" fill="none" stroke="#8c8c8c" aria-hidden="true">
            <path d="M.5 2.500h8v8h-8zM2.500 2.500V1.500q0-1 1-1h6q1 0 1 1v6q0 1-1 1h-1" />
          </svg>
        </button>
        <button type="button" aria-label="Закрыть" className="mr-0.5 grid h-full w-[46px] place-items-center">
          <svg viewBox="0 0 11 11" className="size-[11px]" stroke="#8c8c8c" aria-hidden="true"><path d="m.5.500 10 10M10.500.500l-10 10" /></svg>
        </button>
      </header>
      <nav className="flex h-5 shrink-0 items-center gap-[11px] pl-1.5 font-['Noto_Sans',sans-serif] text-xs text-[#6e6e6e]">
        {mainMenu.map((m) => (
          <button key={m} type="button">{m}</button>
        ))}
      </nav>
      <MainToolbar />
      <main className="flex min-h-0 flex-1">
        <div className="flex w-[798px] shrink-0"><Panel /></div>
        <MiddleBar />
        <Panel active />
      </main>
      <div className="flex h-[22px] shrink-0 items-end bg-linear-to-b from-white to-[#e8e8e8]">
        <label htmlFor="command" className="w-[799px] text-right font-['Noto_Sans',sans-serif] text-xs leading-[20px]">D:\</label>
        <div className="ml-[5px] flex h-5 flex-1 items-center rounded-tl-sm border-t border-l border-[#777] bg-white pr-[5px]">
          <input id="command" className="h-full min-w-0 flex-1 outline-none" />
          <button type="button" aria-label="История команд">
            <svg viewBox="0 0 9 6" className="h-1.5 w-[9px]" fill="none" stroke="#000" strokeWidth="1.600" aria-hidden="true">
              <path d="M.5.800 4.500 4.800 8.500.800" />
            </svg>
          </button>
        </div>
      </div>
      <SearchDialog />
    </div>
  )
}
